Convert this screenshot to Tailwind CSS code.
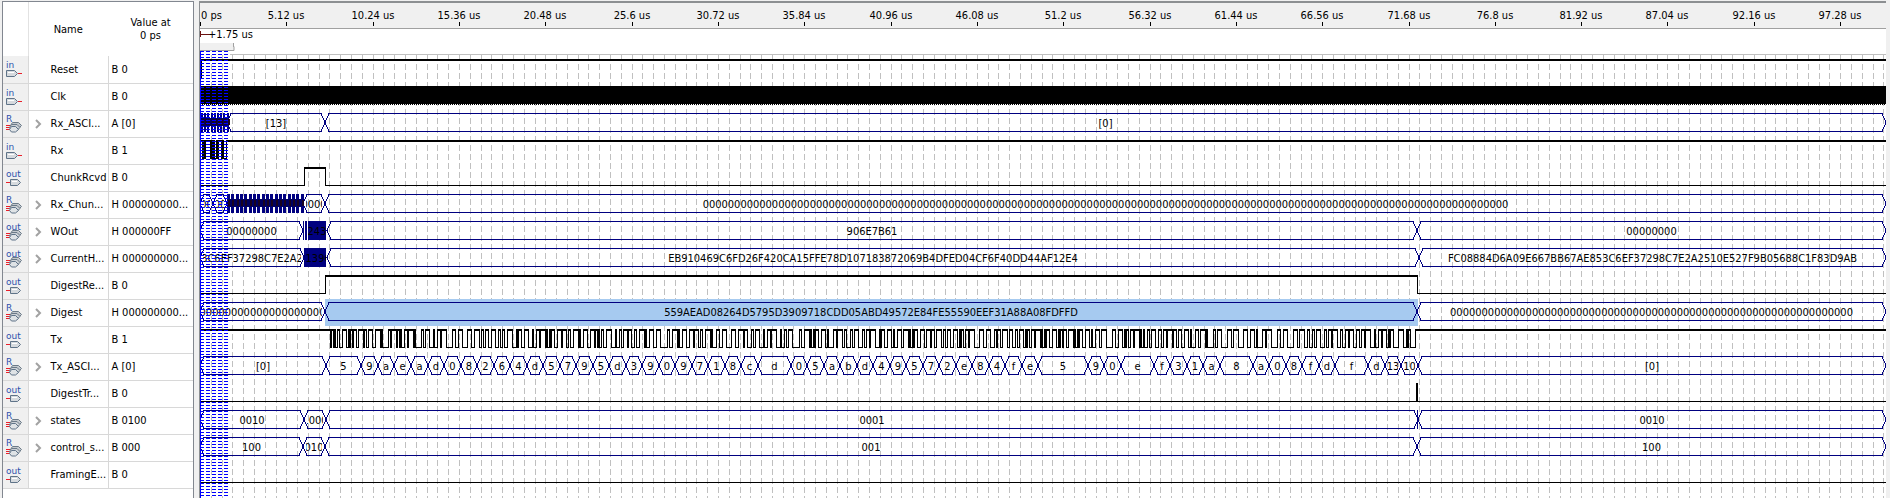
<!DOCTYPE html>
<html lang="en">
<head>
<meta charset="utf-8">
<title>Simulation Waveform</title>
<script src="https://cdn.jsdelivr.net/npm/@tailwindcss/browser@4"></script>
</head>
<body class="flex h-screen gap-[5px] overflow-hidden bg-[#f0f0f0] pt-px pl-[2px] pr-1 font-['DejaVu_Sans_Condensed','Noto_Sans',sans-serif] text-[11px] leading-[13px] text-black">

<svg class="hidden" aria-hidden="true">
  <symbol id="icon-pin-in" viewBox="0 0 24 26">
    <path d="M3.5 14.5h8l3 3-3 3h-8z" fill="#d6dade" stroke="#5f7388"/><path d="M5 16.500h6" stroke="#fff"/><path d="M15 17.5h4" stroke="#e8202a"/>
  </symbol>
  <symbol id="icon-pin-out" viewBox="0 0 24 26">
    <path d="M7.5 14.5h7l3 3-3 3h-7z" fill="#d6dade" stroke="#5f7388"/><path d="M9 16.500h5" stroke="#fff"/><path d="M3 17.5h4" stroke="#e8202a"/>
  </symbol>
  <symbol id="icon-bus" viewBox="0 0 24 26">
    <path d="M3 14.5h5M3 16.5h4M3 18.5h5" stroke="#e8202a"/>
    <path d="M9.500 11.500h6l3 3-3 3h-6l-2-3z" fill="#c4c9ce" stroke="#6b7a88"/>
    <path d="M8.500 13.500h5.500l3 3-3 3h-5.500l-2-3z" fill="#ccd1d6" stroke="#6b7a88"/>
    <path d="M8.500 15.500h4l3 3-3 2.500h-4l-2-2.500z" fill="#dfe3e6" stroke="#5f7388"/>
  </symbol>
</svg>

<section class="w-[192px] shrink-0 border border-b-0 border-[#828790] bg-white" aria-label="Signals">
  <table class="w-full table-fixed border-collapse">
    <colgroup><col class="w-[25px]"><col class="w-[80px]"><col></colgroup>
    <thead>
      <tr class="h-[54px]">
        <th class="border-r border-[#e2e2e2] p-0"></th>
        <th class="p-0 font-normal">Name</th>
        <th class="p-0 font-normal">Value at<br>0 ps</th>
      </tr>
    </thead>
    <tbody id="signals"></tbody>
  </table>
</section>

<main class="flex min-w-0 flex-1 flex-col border-l border-t-2 border-[#8c8f92] bg-white">
  <svg id="ruler" class="h-[26px] w-full shrink-0 border-b border-[#a0a0a0] bg-[#f0f0f0]" role="img" aria-label="Time ruler"></svg>
  <svg id="marker" class="h-[26px] w-full shrink-0" role="img" aria-label="Cursor interval"></svg>
  <div class="relative flex-1">
    <svg id="grid" class="absolute inset-0 size-full" shape-rendering="crispEdges"></svg>
    <div id="waves" class="relative flex flex-col pt-px"></div>
    <svg id="selection" class="absolute -top-1 left-0 h-[calc(100%+4px)] w-full" shape-rendering="crispEdges"></svg>
  </div>
</main>

<script>
const TOTAL = 100; // microseconds shown
const CHARS = [...'559aead08264d5795d3909718cdd05abd49572e84fe55590eef31a88a08fdffd'].map(c => [c, c.charCodeAt(0)]).concat([['13', 13], ['10', 10]]);
const CHAR_T = 0.979, ASCII_T0 = 7.62;
const zeros = n => '0'.repeat(n);

function txAscii() {
  const cells = [[0, 7.5, '[0]']];
  CHARS.forEach(([label], i) => {
    const end = i === CHARS.length - 1 ? 72.23 : ASCII_T0 + (i + 1) * CHAR_T;
    const last = cells[cells.length - 1];
    if (last[2] === label) last[1] = end; else cells.push([last[1], end, label]);
  });
  cells.push([72.23, TOTAL, '[0]']);
  return cells;
}

// 8N1 serial frames: start bit, eight data bits (LSB first), stop bit
function txSerial() {
  const out = [[0, 1]], bit = 0.079;
  CHARS.forEach(([, code], i) => {
    const t = 7.71 + i * CHAR_T;
    [0, ...Array.from({ length: 8 }, (_, b) => code >> b & 1), 1].forEach((v, k) => {
      if (out[out.length - 1][1] !== v) out.push([t + k * bit, v]);
    });
  });
  return out;
}

const SIGNALS = [
  { icon: 'in', name: 'Reset', value: 'B 0', bits: [[0, 0], [0.06, 1]] },
  { icon: 'in', name: 'Clk', value: 'B 0', clock: true },
  { icon: 'R', name: 'Rx_ASCI...', value: 'A [0]', cells: [[1.6, 7.44, '[13]'], [7.44, 100, '[0]']], stripes: [0.06, 1.6, 0.19] },
  { icon: 'in', name: 'Rx', value: 'B 1', bits: [[0, 1], [0.12, 0], [0.18, 1], [0.24, 0], [0.3, 1], [0.45, 1], [0.59, 0], [0.65, 1], [0.71, 0], [0.77, 1], [0.83, 0], [0.95, 1], [1.01, 0], [1.07, 1], [1.25, 0], [1.31, 1], [1.37, 0], [1.54, 1]] },
  { icon: 'out', name: 'ChunkRcvd', value: 'B 0', bits: [[0, 0], [6.14, 1], [7.44, 0]] },
  { icon: 'R', name: 'Rx_Chun...', value: 'H 000000000...', cells: [[0, 0.78, '00'], [0.78, 1.6, '00'], [6.11, 7.44, '0000'], [7.44, 100, zeros(128)]], stripes: [1.6, 6.05, 0.257] },
  { icon: 'out', bus: true, name: 'WOut', value: 'H 000000FF', cells: [[0, 6.11, '00000000'], [7.53, 72.2, '906E7B61'], [72.2, 100, '00000000']], busy: [6.4, 7.47, '02435'], ticks: [6.11, 6.2, 6.3] },
  { icon: 'out', bus: true, name: 'CurrentH...', value: 'H 000000000...', cells: [[0, 6.14, '3C6EF37298C7E2A2'], [7.53, 72.3, 'EB910469C6FD26F420CA15FFE78D107183872069B4DFED04CF6F40DD44AF12E4'], [72.3, 100, 'FC08884D6A09E667BB67AE853C6EF37298C7E2A2510E527F9B05688C1F83D9AB']], busy: [6.14, 7.47, '0213968'] },
  { icon: 'out', name: 'DigestRe...', value: 'B 0', bits: [[0, 0], [7.44, 1], [72.18, 0]] },
  { icon: 'R', name: 'Digest', value: 'H 000000000...', cells: [[0, 7.44, zeros(20)], [7.44, 72.2, '559AEAD08264D5795D3909718CDD05ABD49572E84FE55590EEF31A88A08FDFFD'], [72.2, 100, zeros(64)]], selected: [7.44, 72.24] },
  { icon: 'out', name: 'Tx', value: 'B 1', bits: txSerial() },
  { icon: 'R', name: 'Tx_ASCI...', value: 'A [0]', cells: txAscii() },
  { icon: 'out', name: 'DigestTr...', value: 'B 0', bits: [[0, 0], [72.1, 1], [72.16, 0]] },
  { icon: 'R', name: 'states', value: 'B 0100', cells: [[0, 6.14, '0010'], [6.14, 7.5, '1000'], [7.5, 72.25, '0001'], [72.25, 100, '0010']], ticks: [72.21] },
  { icon: 'R', name: 'control_s...', value: 'B 000', cells: [[0, 6.11, '100'], [6.11, 7.44, '010'], [7.44, 72.2, '001'], [72.2, 100, '100']] },
  { icon: 'out', name: 'FramingE...', value: 'B 0', bits: [[0, 0]] },
];

document.getElementById('signals').innerHTML = SIGNALS.map(s => {
  const bus = s.icon === 'R' || s.bus;
  const shape = bus ? 'icon-bus' : s.icon === 'in' ? 'icon-pin-in' : 'icon-pin-out';
  return `<tr class="h-[27px] border-b border-[#d8d8d8]">
    <td class="border-r border-[#d8d8d8] bg-[#f0f0f0] p-0"><svg class="block h-[26px] w-6" viewBox="0 0 24 26"><use href="#${shape}"/><text x="3" y="${bus ? 11 : 12}" fill="#2f50ac" class="font-['DejaVu_Sans'] text-[9px]">${s.icon}</text></svg></td>
    <td class="border-r border-[#d8d8d8] p-0"><div class="flex items-center whitespace-nowrap"><span class="flex w-[22px] pl-[5px]">${bus ? `<button type="button" aria-label="Expand ${s.name}"><svg class="block h-3 w-2" viewBox="0 0 8 12"><path d="M2 2l4 4-4 4" fill="none" stroke="#a2a2a2" stroke-width="2"/></svg></button>` : ''}</span>${s.name}</div></td>
    <td class="whitespace-nowrap p-0 pl-[3px]">${s.value}</td></tr>`;
}).join('');

const waves = document.getElementById('waves');
function draw() {
  const width = waves.clientWidth;
  const X = t => Math.round(t / TOTAL * width);
  let uid = 0;
  const text = (x, y, s, anchor = 'middle', extra = '') => `<text x="${x}" y="${y}" text-anchor="${anchor}" ${extra}>${s}</text>`;

  let ruler = '';
  for (let i = 0; i < 20; i++) {
    const t = i * 5.12, x = X(t);
    ruler += `<rect x="${x}" y="19" width="1" height="4"/>` + (i ? text(x, 16, +t.toFixed(2) + ' us') : text(1, 16, '0 ps', 'start'));
  }
  document.getElementById('ruler').innerHTML = ruler;

  const sel = X(1.78);
  document.getElementById('marker').innerHTML =
    `<path d="M0.500 2v6M0 5.500h9" stroke="#6b1010"/>` + text(8, 9, '+1.75 us', 'start') +
    `<rect x="0" y="14" width="${sel + 4}" height="7" fill="#f0f0f0"/><path d="M0 21.500h${sel + 4}v-4M${sel + 3.5} 14v4" fill="none" stroke="#a0a0a0"/>` +
    `<path d="M${sel} 25.500H${width}" stroke="#c0c0c0"/>`;

  let grid = '';
  for (let t = 0.64; t < TOTAL; t += 0.64) grid += `M${X(t) + 0.5} 0V2000`;
  document.getElementById('grid').innerHTML = `<path d="${grid}" stroke="#c0c0c0" stroke-dasharray="6 3"/>`;

  let blue = '';
  for (let y = 0; y < 1200; y += 3) blue += `M0 ${y + 0.5}H${sel}`;
  document.getElementById('selection').innerHTML = `<path d="${blue}" stroke="#0000ff" stroke-dasharray="4 2"/><rect width="1" height="2000" fill="#0000ff"/>`;

  waves.innerHTML = SIGNALS.map(s => {
    let g = '', labels = '';
    if (s.selected) g += `<rect x="${X(s.selected[0])}" y="0" width="${X(s.selected[1]) - X(s.selected[0])}" height="27" fill="#a6caf0"/>`;
    if (s.clock) g += `<rect y="3" width="${width}" height="18"/><path d="M0 21.500H${width}" stroke="#000" stroke-dasharray="1 1"/>`;
    if (s.bits) {
      let d = '', hi = '';
      s.bits.forEach(([t, v], i) => {
        const x = X(t), e = i + 1 < s.bits.length ? X(s.bits[i + 1][0]) : width, y = v ? 3.5 : 21.5;
        d += `${i ? 'V' : 'M' + (x + 0.5) + ' '}${y}H${e + 0.5}`;
        if (v) hi += `<rect x="${x}" y="3" width="${Math.max(e - x + 1, 2)}" height="2"/>`;
      });
      g += hi + `<path d="${d}" fill="none" stroke="#000"/>`;
    }
    if (s.cells) {
      let d = '';
      s.cells.forEach(([a, b, label]) => {
        const x0 = X(a), x1 = X(b);
        d += `M${x0} 12.500L${x0 + 4} 3.500H${x1 - 4}L${x1} 12.500L${x1 - 4} 21.500H${x0 + 4}Z`;
        const id = 'clip' + uid++;
        labels += `<clipPath id="${id}"><rect x="${x0 + 3}" y="0" width="${Math.max(x1 - x0 - 6, 0)}" height="27"/></clipPath>` +
          text((x0 + x1) / 2, 17, label, 'middle', `clip-path="url(#${id})"`);
      });
      g += `<path d="${d}" fill="none" stroke="#000080"/>`;
    }
    if (s.stripes) {
      const [a, b, step] = s.stripes;
      for (let t = a; t < b; t += step) g += `<rect x="${X(t)}" y="3" width="${step > 0.2 ? 3 : 2}" height="19" fill="#000080"/>`;
      g += `<rect x="${X(a)}" y="8" width="${X(b) - X(a)}" height="8" fill="#000060"/>`;
      for (let t = a; t < b; t += step) g += `<rect x="${X(t) + 1}" y="9" width="2" height="6" fill="#1a0420"/>`;
    }
    (s.ticks || []).forEach(t => { g += `<rect x="${X(t)}" y="3" width="1" height="19" fill="#000080"/>`; });
    if (s.busy) {
      const x0 = X(s.busy[0]), x1 = X(s.busy[1]), id = 'clip' + uid++;
      g += `<rect x="${x0}" y="3" width="${x1 - x0}" height="19" fill="#000080"/>`;
      labels += `<clipPath id="${id}"><rect x="${x0}" y="3" width="${x1 - x0}" height="19"/></clipPath>` + text((x0 + x1) / 2, 17, s.busy[2], 'middle', `clip-path="url(#${id})"`);
    }
    return `<svg class="block h-[27px] w-full" role="img" aria-label="${s.name}"><g shape-rendering="crispEdges">${g}</g>${labels}</svg>`;
  }).join('');
}
draw();
let drawnWidth = 0;
new ResizeObserver(() => {
  if (waves.clientWidth !== drawnWidth) { drawnWidth = waves.clientWidth; draw(); }
}).observe(waves);
</script>
</body>
</html>
